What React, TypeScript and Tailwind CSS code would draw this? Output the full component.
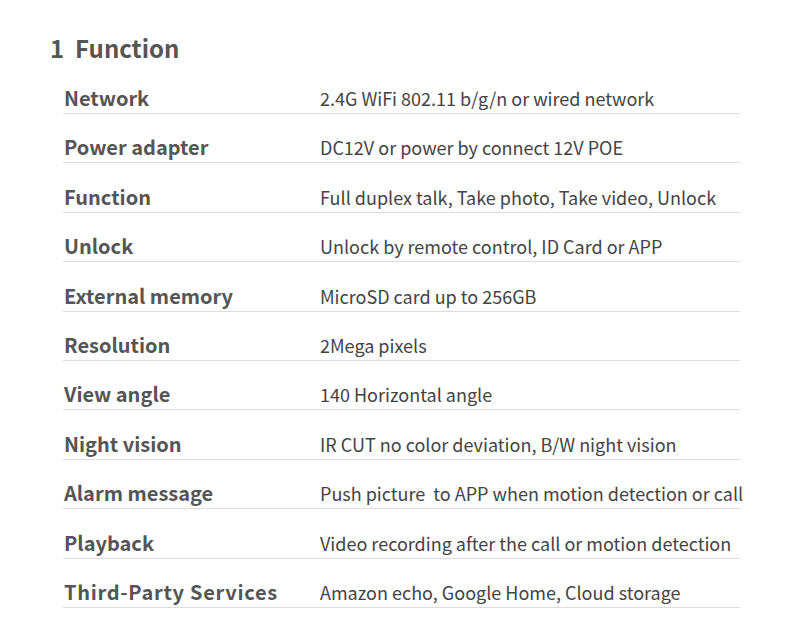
const specs: [string, string, string?][] = [
  ['Network', '2.4G WiFi 802.11 b/g/n or wired network'],
  ['Power adapter', 'DC12V or power by connect 12V POE'],
  ['Function', 'Full duplex talk, Take photo, Take video, Unlock'],
  ['Unlock', 'Unlock by remote control, ID Card or APP'],
  ['External memory', 'MicroSD card up to 256GB'],
  ['Resolution', '2Mega pixels'],
  ['View angle', '140 Horizontal angle'],
  ['Night vision', 'IR CUT no color deviation, B/W night vision'],
  ['Alarm message', 'Push picture  to APP when motion detection or call'],
  ['Playback', 'Video recording after the call or motion detection'],
  ['Third-Party Services', 'Amazon echo, Google Home, Cloud storage', 'tracking-[0.7px]'],
];

export default function App() {
  return (
    <div className="w-[800px] h-[636px] bg-white overflow-hidden">
      <h2 className="pl-[50px] pt-[34px] text-[24px] leading-[28px] font-bold text-[#555] font-['Noto_Sans_CJK_SC',sans-serif]">
        1&nbsp;&nbsp;Function
      </h2>
      <div className="ml-[63px] w-[677px] mt-[2.6px]">
        {specs.map(([label, value, extra]) => (
          <div
            key={label}
            className="flex items-end h-[49.4px] pb-[3px] border-b border-[#dedede] box-border"
          >
            <div
              className={`w-[257px] shrink-0 pl-px text-[20px] leading-[24px] font-bold text-[#555] font-['Noto_Sans_CJK_SC',sans-serif] ${extra ?? ''}`}
            >
              {label}
            </div>
            <div className="whitespace-pre text-[18px] leading-[24px] font-normal text-[#444] font-['Noto_Sans_CJK_SC',sans-serif]">
              {value}
            </div>
          </div>
        ))}
      </div>
    </div>
  );
}
